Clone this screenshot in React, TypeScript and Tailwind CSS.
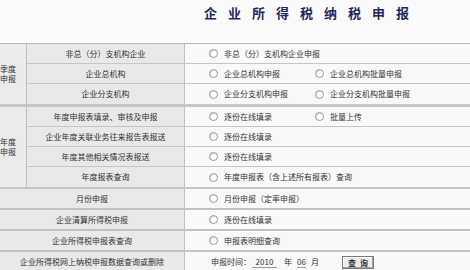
import React from 'react';

const font = "font-['SimSun','Noto_Sans_CJK_SC','Noto_Sans',sans-serif]";

function Radio({ label }: { label: string }) {
  return (
    <div className="flex items-center whitespace-nowrap">
      <span className="w-[9px] h-[9px] shrink-0 rounded-full border border-[#9a9a9a] bg-white shadow-[inset_1px_1px_1px_rgba(0,0,0,0.15)]" />
      <span className="ml-[6px]">{label}</span>
    </div>
  );
}

function Options({ items }: { items: string[] }) {
  return (
    <div className="flex items-center pl-[24px]">
      <div className="w-[106px] shrink-0">
        <Radio label={items[0]} />
      </div>
      {items[1] && <Radio label={items[1]} />}
    </div>
  );
}

function Row({
  label,
  items,
  labelWidth,
  last,
  thick,
}: {
  label: string;
  items: string[];
  labelWidth: string;
  last?: boolean;
  thick?: boolean;
}) {
  const border = last ? '' : thick ? 'border-b-2 border-[#c2c2c2]' : 'border-b border-[#c6c6c6]';
  return (
    <div className={`flex ${thick ? 'h-[21px]' : 'h-[20px]'} ${border}`}>
      <div className={`${labelWidth} shrink-0 bg-[#e9e9e9] border-r border-[#c0c0c0] flex items-center justify-center whitespace-nowrap`}>
        {label}
      </div>
      <div className="flex-1 bg-[#f9f9f9] flex items-center">
        <Options items={items} />
      </div>
    </div>
  );
}

function Group({ title, rows }: { title: string[]; rows: { label: string; items: string[] }[] }) {
  return (
    <div className="flex">
      <div className="w-[27px] shrink-0 bg-[#ebebeb] border-r border-[#c0c0c0] flex items-center justify-end pr-[10px]">
        <div className="leading-[10px] whitespace-nowrap">
          {title[0]}
          <br />
          {title[1]}
        </div>
      </div>
      <div className="flex-1 flex flex-col">
        {rows.map((r, i) => (
          <Row key={r.label} label={r.label} items={r.items} labelWidth="w-[158px]" last={i === rows.length - 1} />
        ))}
      </div>
    </div>
  );
}

export default function App() {
  const quarterly = [
    { label: '非总（分）支机构企业', items: ['非总（分）支机构企业申报'] },
    { label: '企业总机构', items: ['企业总机构申报', '企业总机构批量申报'] },
    { label: '企业分支机构', items: ['企业分支机构申报', '企业分支机构批量申报'] },
  ];
  const annual = [
    { label: '年度申报表填录、审核及申报', items: ['逐份在线填录', '批量上传'] },
    { label: '企业年度关联业务往来报告表报送', items: ['逐份在线填录'] },
    { label: '年度其他相关情况表报送', items: ['逐份在线填录'] },
    { label: '年度报表查询', items: ['年度申报表（含上述所有报表）查询'] },
  ];
  const others = [
    { label: '月份申报', items: ['月份申报（定率申报）'] },
    { label: '企业清算所得税申报', items: ['逐份在线填录'] },
    { label: '企业所得税申报表查询', items: ['申报表明细查询'] },
  ];

  return (
    <div className={`w-[470px] h-[270px] overflow-hidden bg-[#fbfbfb] text-[8px] text-[#333] ${font}`}>
      <div className="h-[43px] pl-[204px] pt-[6px]">
        <div className="text-[13px] font-bold tracking-[11px] text-[#1e2a5e] leading-[14px] whitespace-nowrap">
          企业所得税纳税申报
        </div>
      </div>

      <div className="border-t border-[#bcbcbc]">
        <Group title={['季度', '申报']} rows={quarterly} />
        <div className="h-[3px] bg-[#c6c6c6]" />
        <Group title={['年度', '申报']} rows={annual} />
        <div className="h-[2px] bg-[#c6c6c6]" />
        {others.map((r) => (
          <Row key={r.label} label={r.label} items={r.items} labelWidth="w-[185px]" thick />
        ))}
        <div className="flex h-[20px]">
          <div className="w-[185px] shrink-0 bg-[#e9e9e9] border-r border-[#c0c0c0] flex items-center justify-center whitespace-nowrap">
            企业所得税网上纳税申报数据查询或删除
          </div>
          <div className="flex-1 bg-[#f9f9f9] flex items-center pl-[26px] whitespace-nowrap">
            <span>申报时间：</span>
            <span className="ml-[1px] w-[25px] border-b border-[#9a9a9a] text-center leading-[10px]">2010</span>
            <span className="ml-[7px]">年</span>
            <span className="ml-[5px] w-[9px] border-b border-[#9a9a9a] text-center leading-[10px]">06</span>
            <span className="ml-[5px]">月</span>
            <button className="ml-[23px] h-[13px] w-[32px] border border-[#7a7a7a] bg-[#ececec] shadow-[inset_-1px_-1px_0_#a0a0a0,inset_1px_1px_0_#ffffff] text-[8px] font-bold tracking-[4px] leading-[11px] pl-[4px]">
              查询
            </button>
          </div>
        </div>
      </div>
    </div>
  );
}
